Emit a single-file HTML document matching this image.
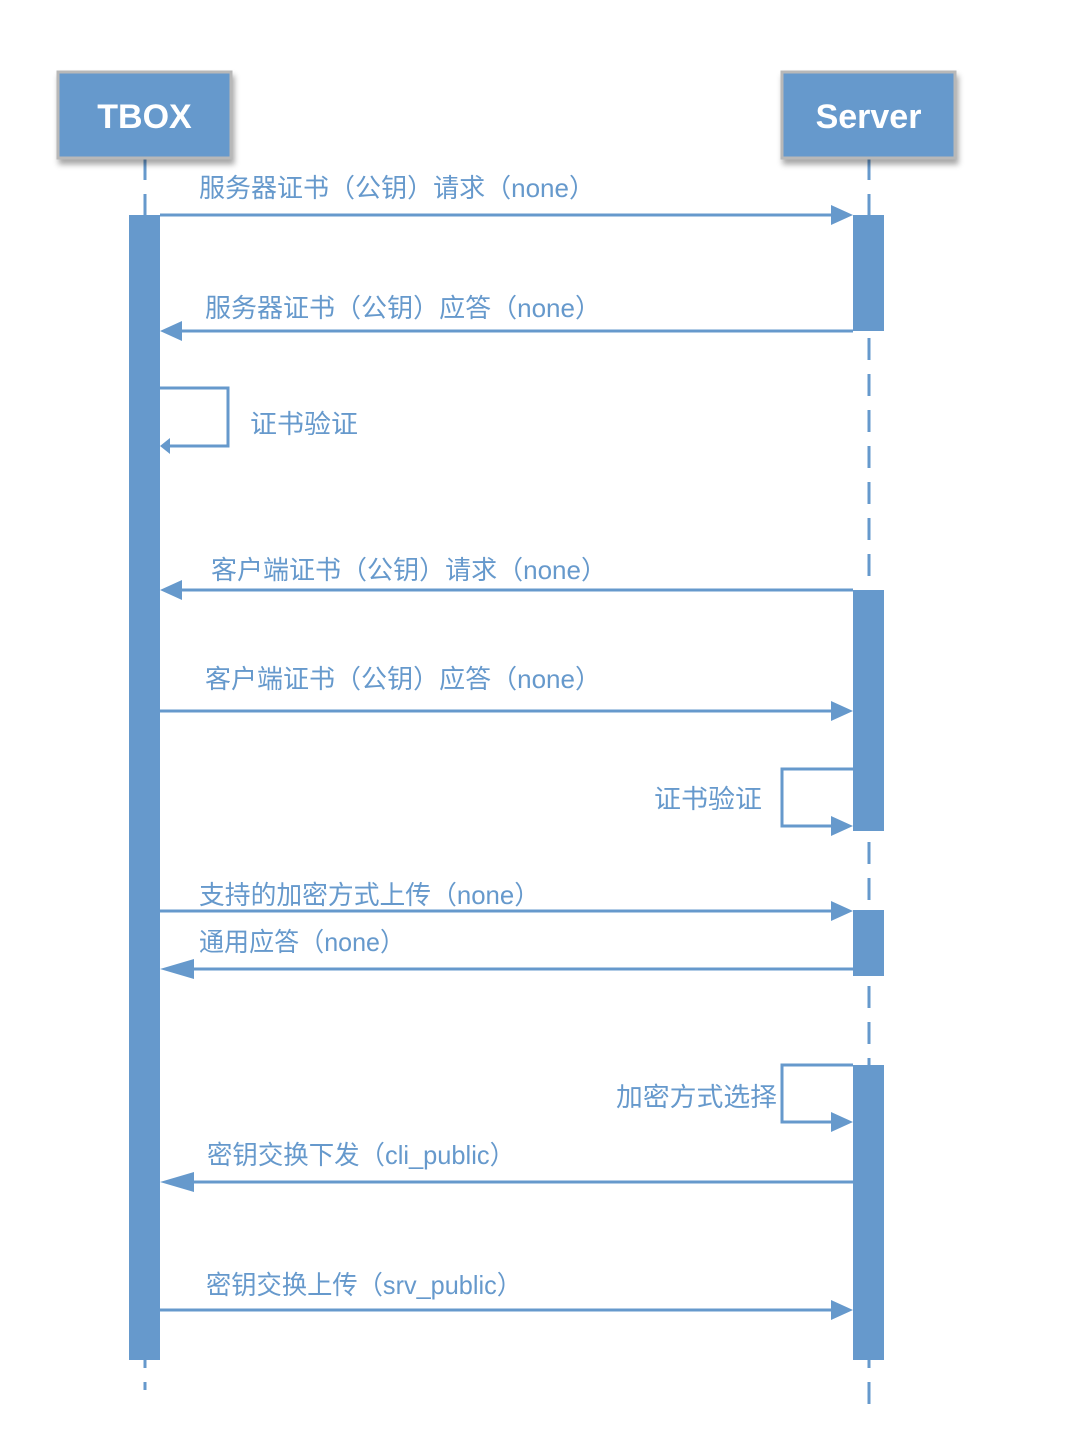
<!DOCTYPE html>
<html><head><meta charset="utf-8"><style>
html,body{margin:0;padding:0;background:#fff;}
svg{display:block}
text{font-family:"Liberation Sans","Noto Sans CJK SC",sans-serif;fill:#6699cc;font-size:26px}
</style></head><body>
<svg width="1092" height="1440" viewBox="0 0 1092 1440">
<defs>
<filter id="sh" x="-20%" y="-20%" width="140%" height="150%"><feDropShadow dx="2" dy="5" stdDeviation="3" flood-color="#000" flood-opacity="0.35"/></filter>
</defs>
<line x1="145" y1="158" x2="145" y2="1390" stroke="#6699cc" stroke-width="3" stroke-dasharray="22,14"/>
<line x1="869" y1="158" x2="869" y2="1405" stroke="#6699cc" stroke-width="3" stroke-dasharray="22,14"/>
<rect x="58" y="72" width="173" height="86" fill="#6699cc" stroke="#b8b8b8" stroke-width="3" filter="url(#sh)"/>
<rect x="782" y="72" width="173" height="86" fill="#6699cc" stroke="#b8b8b8" stroke-width="3" filter="url(#sh)"/>
<text x="144.5" y="128" text-anchor="middle" style="fill:#fff;font-weight:bold;font-size:34px">TBOX</text>
<text x="868.5" y="128" text-anchor="middle" style="fill:#fff;font-weight:bold;font-size:34px">Server</text>
<rect x="129" y="215" width="31" height="1145" fill="#6699cc"/>
<rect x="853" y="215" width="31" height="116" fill="#6699cc"/>
<rect x="853" y="590" width="31" height="241" fill="#6699cc"/>
<rect x="853" y="910" width="31" height="66" fill="#6699cc"/>
<rect x="853" y="1065" width="31" height="295" fill="#6699cc"/>
<g stroke="#6699cc" stroke-width="3" fill="none">
<line x1="160" y1="215" x2="835" y2="215"/>
<line x1="178" y1="331" x2="853" y2="331"/>
<polyline points="160,388 228,388 228,446 168,446"/>
<line x1="178" y1="590" x2="853" y2="590"/>
<line x1="160" y1="711" x2="835" y2="711"/>
<polyline points="853,769 782,769 782,826 835,826"/>
<line x1="160" y1="911" x2="835" y2="911"/>
<line x1="178" y1="969" x2="853" y2="969"/>
<polyline points="853,1065 782,1065 782,1122 835,1122"/>
<line x1="178" y1="1182" x2="853" y2="1182"/>
<line x1="160" y1="1310" x2="835" y2="1310"/>
</g>
<g fill="#6699cc">
<polygon points="853,215 831,205 831,225"/>
<polygon points="160,331 182,321 182,341"/>
<polygon points="160,446 170,438 170,454"/>
<polygon points="160,590 182,580 182,600"/>
<polygon points="853,711 831,701 831,721"/>
<polygon points="853,826 831,816 831,836"/>
<polygon points="853,911 831,901 831,921"/>
<polygon points="160,969 194,959 194,979"/>
<polygon points="853,1122 831,1112 831,1132"/>
<polygon points="160,1182 194,1172 194,1192"/>
<polygon points="853,1310 831,1300 831,1320"/>
</g>
<text x="199" y="197" textLength="396" lengthAdjust="spacingAndGlyphs">服务器证书（公钥）请求（none）</text>
<text x="205" y="317" textLength="396" lengthAdjust="spacingAndGlyphs">服务器证书（公钥）应答（none）</text>
<text x="250" y="433" textLength="108" lengthAdjust="spacingAndGlyphs">证书验证</text>
<text x="211" y="579" textLength="396" lengthAdjust="spacingAndGlyphs">客户端证书（公钥）请求（none）</text>
<text x="205" y="688" textLength="396" lengthAdjust="spacingAndGlyphs">客户端证书（公钥）应答（none）</text>
<text x="654" y="808" textLength="108" lengthAdjust="spacingAndGlyphs">证书验证</text>
<text x="199" y="904" textLength="341" lengthAdjust="spacingAndGlyphs">支持的加密方式上传（none）</text>
<text x="199" y="951" textLength="206" lengthAdjust="spacingAndGlyphs">通用应答（none）</text>
<text x="616" y="1106" textLength="161" lengthAdjust="spacingAndGlyphs">加密方式选择</text>
<text x="207" y="1164" textLength="308" lengthAdjust="spacingAndGlyphs">密钥交换下发（cli_public）</text>
<text x="206" y="1294" textLength="316" lengthAdjust="spacingAndGlyphs">密钥交换上传（srv_public）</text>
</svg>
</body></html>
